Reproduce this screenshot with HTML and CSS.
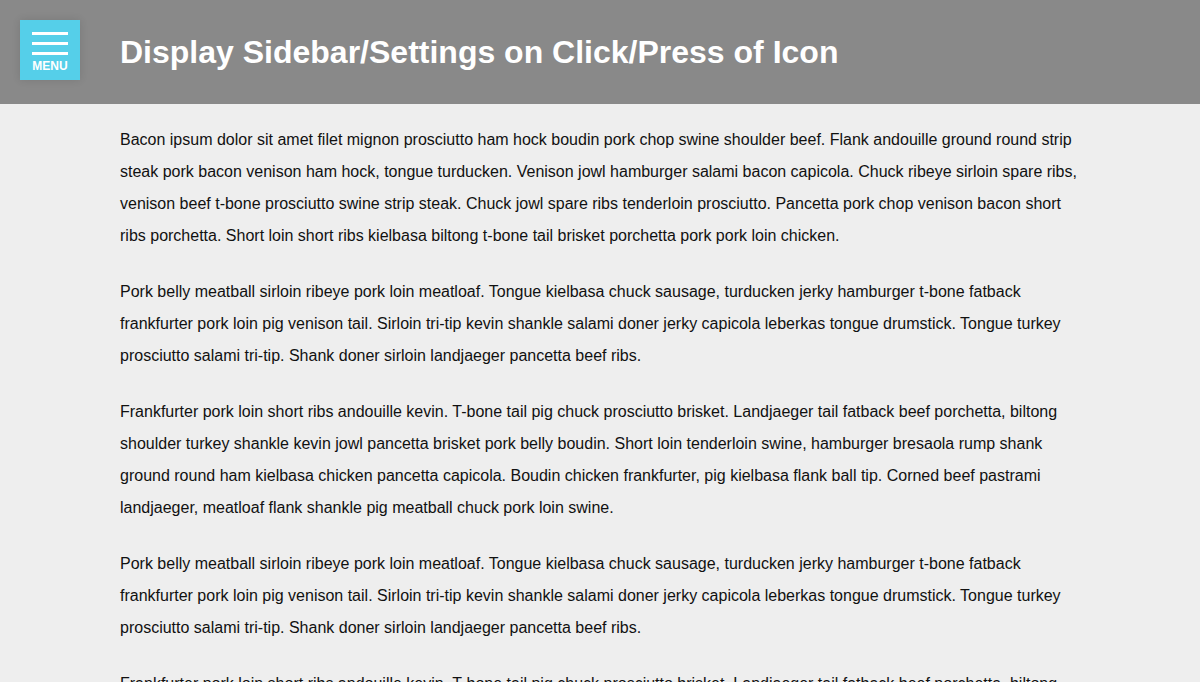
FILE: index.html
```html
<!DOCTYPE html>
<html lang="en">
<head>
    <meta charset="UTF-8">
    <meta name="viewport" content="width=device-width, initial-scale=1.0">
    <title>Display Sidebar/Settings on Click/Press of Icon</title>
    <link rel="stylesheet" href="styles.css">
</head>
<body>
    <header>
        <button class="menu-button">
            <span class="bar"></span>
            <span class="bar"></span>
            <span class="bar"></span>
            <span class="menu-label">MENU</span>
        </button>
        <h1>Display Sidebar/Settings on Click/Press of Icon</h1>
    </header>
    <div class="content">
        <p>Bacon ipsum dolor sit amet filet mignon prosciutto ham hock boudin pork chop swine shoulder beef. Flank andouille ground round strip steak pork bacon venison ham hock, tongue turducken. Venison jowl hamburger salami bacon capicola. Chuck ribeye sirloin spare ribs, venison beef t-bone prosciutto swine strip steak. Chuck jowl spare ribs tenderloin prosciutto. Pancetta pork chop venison bacon short ribs porchetta. Short loin short ribs kielbasa biltong t-bone tail brisket porchetta pork pork loin chicken.</p>
        <p>Pork belly meatball sirloin ribeye pork loin meatloaf. Tongue kielbasa chuck sausage, turducken jerky hamburger t-bone fatback frankfurter pork loin pig venison tail. Sirloin tri-tip kevin shankle salami doner jerky capicola leberkas tongue drumstick. Tongue turkey prosciutto salami tri-tip. Shank doner sirloin landjaeger pancetta beef ribs.</p>
        <p>Frankfurter pork loin short ribs andouille kevin. T-bone tail pig chuck prosciutto brisket. Landjaeger tail fatback beef porchetta, biltong shoulder turkey shankle kevin jowl pancetta brisket pork belly boudin. Short loin tenderloin swine, hamburger bresaola rump shank ground round ham kielbasa chicken pancetta capicola. Boudin chicken frankfurter, pig kielbasa flank ball tip. Corned beef pastrami landjaeger, meatloaf flank shankle pig meatball chuck pork loin swine.</p>
        <p>Pork belly meatball sirloin ribeye pork loin meatloaf. Tongue kielbasa chuck sausage, turducken jerky hamburger t-bone fatback frankfurter pork loin pig venison tail. Sirloin tri-tip kevin shankle salami doner jerky capicola leberkas tongue drumstick. Tongue turkey prosciutto salami tri-tip. Shank doner sirloin landjaeger pancetta beef ribs.</p>
        <p>Frankfurter pork loin short ribs andouille kevin. T-bone tail pig chuck prosciutto brisket. Landjaeger tail fatback beef porchetta, biltong shoulder turkey shankle kevin jowl pancetta brisket pork belly boudin. Short loin tenderloin swine, hamburger bresaola rump shank ground round ham kielbasa chicken pancetta capicola. Boudin chicken frankfurter, pig kielbasa flank ball tip. Corned beef pastrami landjaeger, meatloaf flank shankle pig meatball chuck pork loin swine.</p>
    </div>
</body>
</html>
```

FILE: styles.css
```css
body {
    font-family: "Liberation Sans", Arial, sans-serif;
    margin: 0;
    padding: 0;
    background-color: #eeeeee;
    color: #111;
}
header {
    background-color: #898989;
    height: 104px;
    display: flex;
    align-items: center;
    padding: 0 20px;
}
.menu-button {
    align-self: flex-start;
    margin: 20px 0 0;
    width: 60px;
    height: 60px;
    background-color: #55cfe9;
    border: none;
    padding: 12px 12px 0;
    box-shadow: 0 0 8px rgba(0, 0, 0, 0.12);
    cursor: pointer;
    display: flex;
    flex-direction: column;
    align-items: stretch;
    box-sizing: border-box;
}
.bar {
    display: block;
    height: 3px;
    background-color: white;
    margin-bottom: 7px;
}
.menu-label {
    font-family: "Liberation Sans", Arial, sans-serif;
    font-size: 12px;
    font-weight: bold;
    color: white;
    line-height: 12px;
    text-align: center;
    margin-top: -2px;
}
h1 {
    margin: 0 0 0 40px;
    color: white;
    font-size: 32px;
    font-weight: bold;
}
.content {
    padding: 20px 120px 0;
}
.content p {
    margin: 0 0 24px;
    font-size: 16px;
    line-height: 32px;
}
```
